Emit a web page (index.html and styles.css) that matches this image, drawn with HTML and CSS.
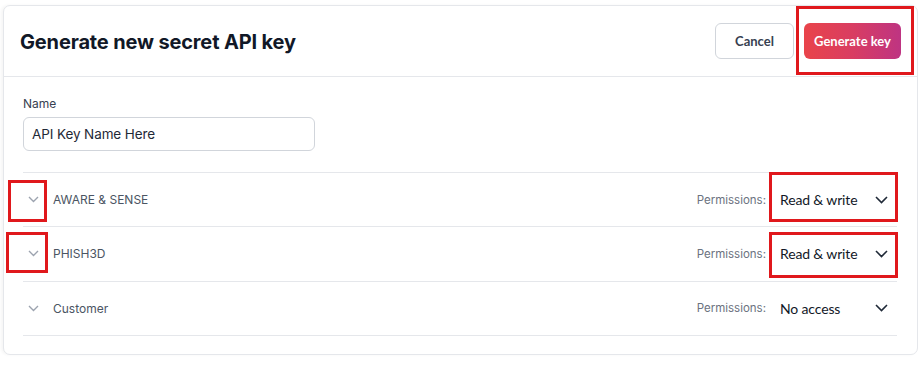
FILE: index.html
```html
<!DOCTYPE html>
<html>
<head>
<meta charset="utf-8">
<link rel="stylesheet" href="styles.css">
</head>
<body>
<div class="card">
  <div class="header">
    <h1 class="title">Generate new secret API key</h1>
    <div class="actions">
      <button class="btn btn-cancel">Cancel</button>
      <button class="btn btn-primary">Generate key</button>
    </div>
  </div>
  <div class="content">
    <label class="field-label">Name</label>
    <div class="input">API Key Name Here</div>
    <div class="list">
      <div class="row">
        <svg class="chev" width="11" height="7" viewBox="0 0 11 7"><path d="M1 1l4.5 4.5L10 1" fill="none" stroke="#9ca3af" stroke-width="1.4"/></svg>
        <span class="row-label">AWARE &amp; SENSE</span>
        <span class="perm-label">Permissions:</span>
        <div class="select"><span>Read &amp; write</span><svg width="13" height="8" viewBox="0 0 13 8"><path d="M1 1l5.5 5.5L12 1" fill="none" stroke="#1f2937" stroke-width="1.6"/></svg></div>
      </div>
      <div class="row">
        <svg class="chev" width="11" height="7" viewBox="0 0 11 7"><path d="M1 1l4.5 4.5L10 1" fill="none" stroke="#9ca3af" stroke-width="1.4"/></svg>
        <span class="row-label">PHISH3D</span>
        <span class="perm-label">Permissions:</span>
        <div class="select"><span>Read &amp; write</span><svg width="13" height="8" viewBox="0 0 13 8"><path d="M1 1l5.5 5.5L12 1" fill="none" stroke="#1f2937" stroke-width="1.6"/></svg></div>
      </div>
      <div class="row">
        <svg class="chev" width="11" height="7" viewBox="0 0 11 7"><path d="M1 1l4.5 4.5L10 1" fill="none" stroke="#9ca3af" stroke-width="1.4"/></svg>
        <span class="row-label">Customer</span>
        <span class="perm-label">Permissions:</span>
        <div class="select"><span>No access</span><svg width="13" height="8" viewBox="0 0 13 8"><path d="M1 1l5.5 5.5L12 1" fill="none" stroke="#1f2937" stroke-width="1.6"/></svg></div>
      </div>
    </div>
  </div>
</div>
<div class="mark mark-gen"></div>
<div class="mark mark-c1"></div>
<div class="mark mark-c2"></div>
<div class="mark mark-s1"></div>
<div class="mark mark-s2"></div>
</body>
</html>
```
FILE: styles.css
```css
* { box-sizing: border-box; }
html, body { margin: 0; padding: 0; background: #ffffff; }
body {
  width: 922px;
  height: 370px;
  position: relative;
  font-family: Inter, "Liberation Sans", sans-serif;
  overflow: hidden;
}
.card {
  margin: 5px 0 0 3px;
  width: 915px;
  height: 350px;
  border: 1px solid #e5e7eb;
  border-radius: 7px;
  background: #fff;
  box-shadow: -2px 0 3px rgba(0,0,0,0.04);
}
.header {
  height: 71px;
  border-bottom: 1px solid #e5e7eb;
  display: flex;
  align-items: center;
  justify-content: space-between;
  padding: 0 16px 0 16px;
}
.title {
  margin: 0;
  font-size: 20px;
  font-weight: 700;
  color: #111827;
  letter-spacing: -0.15px;
  padding-top: 1px;
}
.actions { display: flex; gap: 10px; }
.btn {
  height: 36px;
  border-radius: 6px;
  font-family: Lato, "Liberation Sans", sans-serif;
  font-weight: 700;
  font-size: 13px;
  cursor: pointer;
}
.btn-cancel {
  width: 79px;
  background: #fff;
  border: 1px solid #d1d5db;
  color: #374151;
}
.btn-primary {
  width: 97px;
  border: none;
  color: #fff;
  background: linear-gradient(90deg, #e9444a 0%, #d93d62 50%, #be3482 100%);
}
.content { padding: 19px 20px 0 19px; }
.field-label {
  display: block;
  font-size: 12px;
  line-height: 16px;
  color: #374151;
  margin-bottom: 5px;
}
.input {
  width: 292px;
  height: 34px;
  border: 1px solid #d1d5db;
  border-radius: 6px;
  display: flex;
  align-items: center;
  padding-left: 8px;
  font-size: 13.5px;
  letter-spacing: -0.1px;
  color: #1f2937;
}
.list {
  margin-top: 21px;
  border-top: 1px solid #e5e7eb;
  width: 874px;
}
.row {
  height: 54.3px;
  border-bottom: 1px solid #e5e7eb;
  display: flex;
  align-items: center;
  padding-left: 5px;
}
.chev { flex: none; }
.row-label {
  margin-left: 14px;
  font-size: 12px;
  color: #4b5563;
  flex: 1;
}
.perm-label {
  font-size: 11.5px;
  color: #6b7280;
  margin-right: 13px;
}
.select {
  width: 118px;
  display: flex;
  align-items: center;
  justify-content: space-between;
  padding-left: 1px;
  padding-right: 9px;
  font-family: Lato, "Liberation Sans", sans-serif;
  font-size: 14px;
  letter-spacing: -0.15px;
  color: #111827;
}
.mark {
  position: absolute;
  border: 3px solid #e0181c;
}
.mark-gen { left: 796px; top: 6px; width: 118px; height: 69px; }
.mark-c1 { left: 8px; top: 180px; width: 39px; height: 42px; }
.mark-c2 { left: 6px; top: 232px; width: 42px; height: 41px; }
.mark-s1 { left: 769px; top: 172px; width: 129px; height: 50px; }
.mark-s2 { left: 769px; top: 232px; width: 129px; height: 46px; }
```
